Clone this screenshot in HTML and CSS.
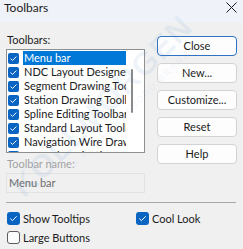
FILE: index.html
```html
<!DOCTYPE html>
<html>

<head>
  <meta charset="UTF-8">
  <title>Toolbars</title>
  <link rel="stylesheet" href="styles.css">
</head>

<body>

  <div class="window">
    <div class="titlebar">
      <span class="title">Toolbars</span>
      <svg class="closeX" width="11" height="11" viewBox="0 0 11 11">
        <path d="M0.5 0.5 L10.5 10.5 M10.5 0.5 L0.5 10.5" stroke="#1a1a1a" stroke-width="1" fill="none" />
      </svg>
    </div>

    <div class="content">
      <div class="main">
        <div class="leftCol">
          <div class="label">Toolbars:</div>
          <div class="listbox">
            <ul class="items">
              <li class="item selected"><span class="check"></span><span class="name">Menu bar</span></li>
              <li class="item"><span class="check"></span><span class="name">NDC Layout Designer</span></li>
              <li class="item"><span class="check"></span><span class="name">Segment Drawing Toolbar</span></li>
              <li class="item"><span class="check"></span><span class="name">Station Drawing Toolbar</span></li>
              <li class="item"><span class="check"></span><span class="name">Spline Editing Toolbar</span></li>
              <li class="item"><span class="check"></span><span class="name">Standard Layout Toolbar</span></li>
              <li class="item"><span class="check"></span><span class="name">Navigation Wire Drawing</span></li>
              <li class="item"><span class="check"></span><span class="name">Natural Navigation</span></li>
            </ul>
            <div class="scrollbar"><div class="thumb"></div></div>
          </div>
          <div class="label disabled nameLabel">Toolbar name:</div>
          <div class="namebox">Menu bar</div>
        </div>

        <div class="buttons">
          <div class="btn default">Close</div>
          <div class="btn">New...</div>
          <div class="btn">Customize...</div>
          <div class="btn">Reset</div>
          <div class="btn">Help</div>
        </div>
      </div>

      <div class="separator"></div>

      <div class="options">
        <div class="option"><span class="cb on"></span>Show Tooltips</div>
        <div class="option"><span class="cb on"></span>Cool Look</div>
        <div class="option"><span class="cb"></span>Large Buttons</div>
      </div>
    </div>

    <div class="watermark">
      <div class="wmMain">KOLLMORGEN</div>
      <div class="wmSub">A REGAL REXNORD BRAND</div>
    </div>
  </div>

</body>

</html>
```

FILE: styles.css
```css
:root {
  --dlg-bg: #f0f0f0;
  --title-bg: #eff3f9;
  --select: #0078d7;
  --check: #0a64c2;
  --text: #1b1b1b;
}

body {
  margin: 0;
  background-color: var(--dlg-bg);
  font-family: Lato, 'Noto Sans', sans-serif;
  font-size: 11px;
  color: var(--text);
  overflow: hidden;
}

.window {
  position: relative;
  width: 243px;
  height: 249px;
  overflow: hidden;
}

.titlebar {
  height: 22px;
  background-color: var(--title-bg);
  display: flex;
  justify-content: space-between;
  align-items: flex-start;
  padding: 0 6px 0 4px;
  box-sizing: border-box;
}

.title {
  font-size: 12px;
  line-height: 16px;
}

.closeX {
  margin-top: 2px;
}

.content {
  padding: 11px 0 0 6px;
}

.main {
  display: flex;
  gap: 12px;
}

.leftCol {
  width: 139px;
}

.label {
  line-height: 14px;
  padding-left: 1px;
}

.disabled {
  color: #a3a3a3;
}

.listbox {
  margin-top: 2px;
  height: 104px;
  box-sizing: border-box;
  border: 1px solid #8e8f8f;
  background: #fff;
  display: flex;
  overflow: hidden;
}

.items {
  flex: none;
  list-style: none;
  margin: 0;
  padding: 1px 0 0 1px;
  width: 118px;
  overflow: hidden;
}

.item {
  height: 14px;
  display: flex;
  align-items: center;
  white-space: nowrap;
}

.check {
  flex: none;
  width: 11px;
  height: 11px;
  border-radius: 2px;
  background-color: var(--check);
  background-image: url("data:image/svg+xml,%3Csvg xmlns='http://www.w3.org/2000/svg' width='11' height='11'%3E%3Cpath d='M2.6 5.6 L4.5 7.4 L8.4 3.6' stroke='white' stroke-width='1' fill='none'/%3E%3C/svg%3E");
  margin-right: 4px;
}

.name {
  line-height: 14px;
  padding: 0 1px;
  overflow: hidden;
}

.selected .name {
  background-color: var(--select);
  color: #fff;
  flex: 1;
}

.scrollbar {
  flex: 1;
  padding: 19px 0 0 5px;
}

.thumb {
  width: 2px;
  height: 44px;
  border-radius: 1px;
  background-color: #8a8a8a;
}

.nameLabel {
  margin-top: 4px;
}

.namebox {
  margin-top: 2px;
  height: 20px;
  box-sizing: border-box;
  border: 1px solid #e2e2e2;
  color: #6d6d6d;
  line-height: 18px;
  padding-left: 2px;
}

.buttons {
  margin-top: 3px;
  width: 80px;
  display: flex;
  flex-direction: column;
  gap: 7px;
}

.btn {
  height: 20px;
  box-sizing: border-box;
  border: 1px solid #d3d3d3;
  border-radius: 4px;
  background-color: #fdfdfd;
  text-align: center;
  line-height: 18px;
}

.btn.default {
  border-color: #2f73c4;
}

.separator {
  margin: 9px 7px 0 0;
  height: 1px;
  background-color: #a8a8a8;
}

.options {
  margin-top: 6px;
  display: grid;
  grid-template-columns: 129px auto;
  padding-left: 1px;
}

.option {
  height: 19px;
  display: flex;
  align-items: center;
}

.cb {
  width: 13px;
  height: 13px;
  box-sizing: border-box;
  border-radius: 3px;
  border: 1px solid #5c5c5c;
  margin-right: 3px;
  background-color: #fbfbfb;
}

.cb.on {
  border: none;
  background-color: var(--check);
  background-image: url("data:image/svg+xml,%3Csvg xmlns='http://www.w3.org/2000/svg' width='13' height='13'%3E%3Cpath d='M3.3 6.6 L5.4 8.6 L9.7 4.3' stroke='white' stroke-width='1' fill='none'/%3E%3C/svg%3E");
}

/* faint diagonal brand mark over the dialog */
.watermark {
  position: absolute;
  left: -15px;
  top: 88px;
  width: 240px;
  transform: rotate(-45deg);
  text-align: center;
  font-family: 'Liberation Sans', sans-serif;
  font-weight: bold;
  color: rgba(80, 140, 210, 0.09);
  pointer-events: none;
}

.wmMain {
  font-size: 32px;
  line-height: 34px;
  letter-spacing: 1px;
}

.wmSub {
  font-size: 9px;
  font-weight: normal;
  letter-spacing: 2px;
  margin-left: 40px;
}
```
